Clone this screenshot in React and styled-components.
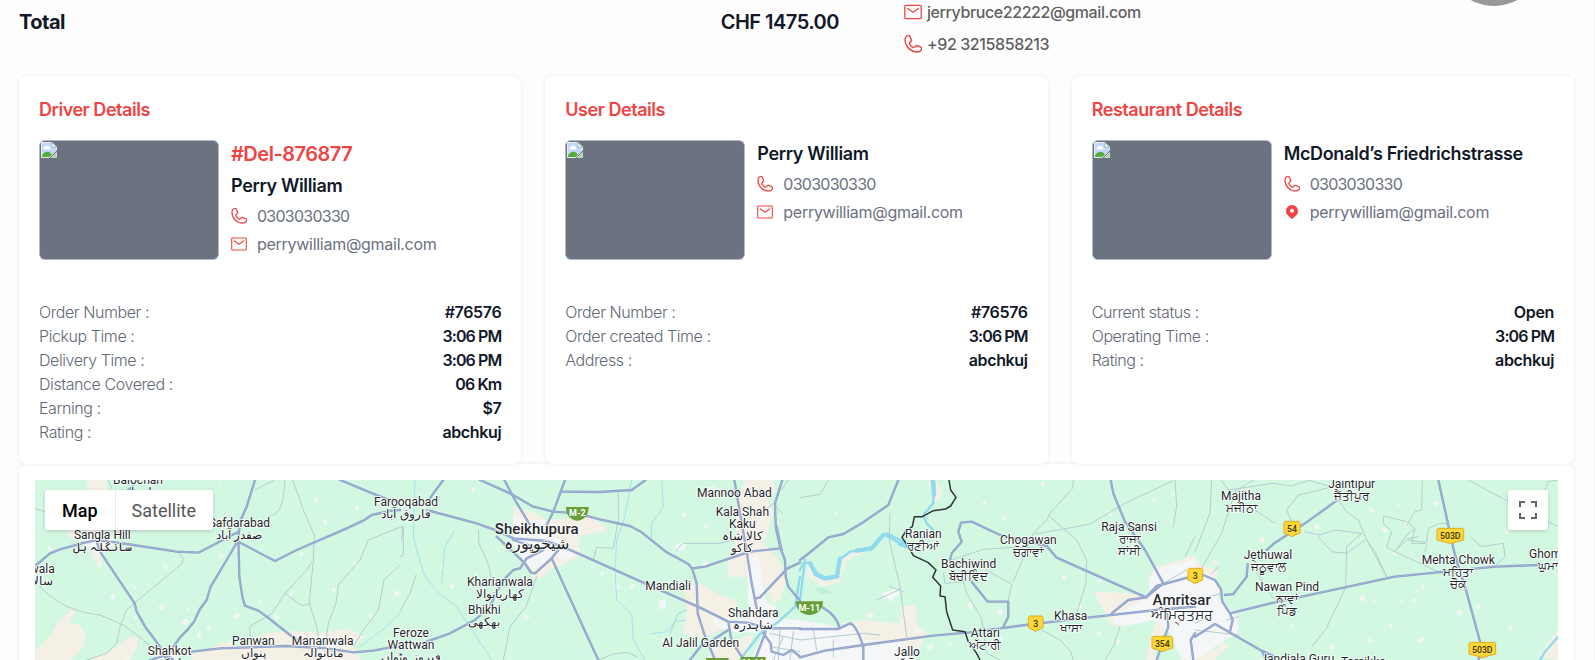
import React from "react";
import styled, { createGlobalStyle, css } from "styled-components";
import { PiPhone } from "react-icons/pi";

const red = "#ef4444";
const ink = "#111827";
const muted = "#6b7280";

const GlobalStyle = createGlobalStyle`
  *, *::before, *::after { box-sizing: border-box; }
  html, body { margin: 0; height: 100%; overflow: hidden; background: #fefefe; }
  body { font-family: Inter, "Liberation Sans", sans-serif; font-size: 16px; line-height: 24px; }
`;

/* ---------- page ---------- */

const Page = styled.main`
  height: 660px;
  padding: 0 20px 0 19px;
  overflow: hidden;
  border-right: 1px solid #f4f4f4;
  display: flex;
  flex-direction: column;
`;

const Summary = styled.header`
  flex: none;
  height: 76px;
  display: grid;
  grid-template-columns: 820px 65px 1fr auto;
  align-items: start;
`;

const TotalRow = styled.div`
  display: flex;
  justify-content: space-between;
  padding-top: 10px;
  color: ${ink};
  font-size: 20px;
  font-weight: 600;
  letter-spacing: -0.5px;
`;

const TotalLabel = styled.span`
  font-weight: 700;
`;

const Customer = styled.div`
  grid-column: 3;
  display: flex;
  flex-direction: column;
  gap: 8px;
  color: #5f6062;
  font-weight: 500;
`;

const CustomerLine = styled.div`
  display: flex;
  align-items: center;
  gap: 5px;
  letter-spacing: -0.41px;
`;

const Avatar = styled.div`
  width: 96px;
  height: 96px;
  margin: -90.5px 32px 0 0;
  border-radius: 50%;
  background: #999;
`;

/* ---------- detail cards ---------- */

const Cards = styled.section`
  position: relative;
  z-index: 1;
  flex: none;
  display: grid;
  grid-template-columns: repeat(3, 1fr);
  gap: 24px;
  height: 388px;
`;

const panel = css`
  background: #fff;
  border-radius: 8px;
  box-shadow: 0 0 5px rgba(0, 0, 0, 0.08);
`;

const Card = styled.article`
  ${panel}
  padding: 20px;
  display: flex;
  flex-direction: column;
`;

const CardTitle = styled.h2`
  margin: 0;
  height: 44px;
  line-height: 28px;
  font-size: 18px;
  font-weight: 600;
  letter-spacing: -0.46px;
  color: ${red};
`;

const Profile = styled.div`
  display: flex;
  gap: 12px;
  height: 120px;
  margin-bottom: 40px;
`;

const Photo = styled.div`
  flex: none;
  width: 180px;
  height: 120px;
  padding: 1px 0 0 1px;
  line-height: 0;
  border: 1px solid #b4b7bb;
  border-radius: 6px;
  background: ${muted};
`;

const Contact = styled.div`
  white-space: nowrap;
`;

const DriverId = styled.p`
  margin: 0;
  height: 32px;
  line-height: 28px;
  font-size: 20px;
  font-weight: 600;
  letter-spacing: -0.5px;
  color: ${red};
`;

const Name = styled.h3`
  margin: 0;
  height: 32px;
  line-height: 27px;
  font-size: 18px;
  font-weight: 600;
  letter-spacing: -0.34px;
  color: ${ink};
`;

const ContactLine = styled.p`
  margin: 0 0 4px;
  display: flex;
  align-items: center;
  gap: 10px;
  color: ${muted};
  letter-spacing: ${(p) => p.$spacing}px;
`;

const Facts = styled.dl`
  margin: 0;
`;

const Fact = styled.div`
  display: flex;
  justify-content: space-between;
  height: 24px;
`;

const FactLabel = styled.dt`
  color: #626975;
  font-weight: 300;
  letter-spacing: -0.42px;
`;

const FactValue = styled.dd`
  margin: 0;
  color: ${ink};
  font-weight: 600;
  letter-spacing: ${(p) => (p.$tight ? -0.9 : -0.35)}px;
`;

/* ---------- map panel ---------- */

const MapPanel = styled.section`
  ${panel}
  flex: none;
  padding: 16px;
  height: 230px;
`;

const MapFrame = styled.div`
  position: relative;
  height: 180px;
  overflow: hidden;
  background: #d3f8e2;
`;

const MapSvg = styled.svg`
  display: block;
  width: 100%;
  height: 100%;
  font-family: Roboto, "Noto Sans", sans-serif;
`;

const control = css`
  position: absolute;
  top: 10px;
  height: 40px;
  background: #fff;
  border-radius: 2px;
  box-shadow: 0 1px 4px -1px rgba(0, 0, 0, 0.3);
  display: flex;
  align-items: center;
`;

const MapTypes = styled.div`
  ${control}
  left: 10px;
`;

const MapType = styled.button`
  height: 40px;
  padding: 0 17px 0 ${(p) => (p.$active ? 17 : 16)}px;
  border: 0;
  border-left: ${(p) => (p.$active ? "0" : "1px solid #ececec")};
  background: none;
  font: ${(p) => (p.$active ? 500 : 400)} 18px Roboto, sans-serif;
  color: ${(p) => (p.$active ? "#000" : "#565656")};
`;

const FullscreenButton = styled.button`
  ${control}
  right: 10px;
  width: 40px;
  padding: 0;
  border: 0;
  justify-content: center;
`;

/* ---------- icons ---------- */

const PhoneIcon = ({ size = 16 }) => (
  <PiPhone size={size} viewBox="28 28 200 200" color={red} />
);

const MailIcon = ({ size = 16 }) => (
  <svg width={size} height={size} viewBox="0 0 18 18" fill="none" stroke={red} strokeWidth="1.25" strokeLinejoin="round" strokeLinecap="round">
    <rect x="0.8" y="2.3" width="16.4" height="13.4" rx="0.9" />
    <path d="M3.6 5.4 9 9.3l5.4-3.9" />
  </svg>
);

const PinIcon = () => (
  <svg width="16" height="16" viewBox="0 0 16 16">
    <path fill={red} fillRule="evenodd" d="M8 .9a6 6 0 0 1 6 6c0 3-1.900 4.700-3.700 6.100L8 15.200 5.700 13C3.900 11.600 2 9.900 2 6.900a6 6 0 0 1 6-6Zm0 3.900a2 2 0 1 0 0 4 2 2 0 0 0 0-4Z" />
  </svg>
);

const BrokenImage = () => (
  <svg width="16" height="16" viewBox="0 0 16 16">
    <path d="M.5.5h10.500l4.500 4.500v3L8.500 15.500h-8Z" fill="#c3d8f7" stroke="#e8ecf1" />
    <path d="M2.500 6.500a2 2 0 0 1 2-2 2 2 0 0 1 3.600.5 1.300 1.300 0 0 1 .4 2.500h-5a1 1 0 0 1-1-1Z" fill="#fff" />
    <path d="M1 15v-1.500c2-3.500 5.500-5 8.500-2.500L11 12.500 8.500 15Z" fill="#54ad35" />
    <path d="M10.800.6V5.200h4.600Z" fill="#fff" stroke="#929ba8" strokeWidth=".7" />
    <path d="M15.500 10.500v5h-5Z" fill="#a9d29b" stroke="#e8ecf1" strokeWidth=".7" />
  </svg>
);

const contactIcons = { phone: PhoneIcon, mail: MailIcon, pin: PinIcon };

/* ---------- data ---------- */

const cards = [
  {
    title: "Driver Details",
    id: "#Del-876877",
    name: "Perry William",
    contacts: [["phone", "0303030330"], ["mail", "perrywilliam@gmail.com"]],
    facts: [
      ["Order Number :", "#76576"],
      ["Pickup Time :", "3:06 PM"],
      ["Delivery Time :", "3:06 PM"],
      ["Distance Covered :", "06 Km"],
      ["Earning :", "$7"],
      ["Rating :", "abchkuj"],
    ],
  },
  {
    title: "User Details",
    name: "Perry William",
    contacts: [["phone", "0303030330"], ["mail", "perrywilliam@gmail.com"]],
    facts: [
      ["Order Number :", "#76576"],
      ["Order created Time :", "3:06 PM"],
      ["Address :", "abchkuj"],
    ],
  },
  {
    title: "Restaurant Details",
    name: "McDonald’s Friedrichstrasse",
    contacts: [["phone", "0303030330"], ["pin", "perrywilliam@gmail.com"]],
    facts: [
      ["Current status :", "Open"],
      ["Operating Time :", "3:06 PM"],
      ["Rating :", "abchkuj"],
    ],
  },
];

/* Map geometry is stored per tile, at three units to the pixel. */
const tiles = [
  {
    x: 0,
    sand: [
      "M105 575C130 540 155 535 170 490L215 447 227 455 207 490 240 495C265 530 262 555 215 600H105Z",
      "M262 60H320V90H262ZM195 200 300 195 310 225 300 310 278 300 272 245 210 235Z",
      "M330 575 385 530 412 530 412 560 390 600H265Z",
      "M575 585 640 560 668 545 720 560 800 520 880 512 960 520 1040 505 1095 530 1060 560 1080 600H575Z",
    ],
    town: ["M255 225 330 222 345 250 300 285 255 262Z", "M470 565 540 560 530 600H470Z", "M930 525 1010 530 1020 560 940 570Z"],
    minor: [
      "M105 145 140 157M325 60 335 85M120 380C190 450 250 458 300 465L370 495 450 555",
      "M535 278 550 295 545 312 408 425 380 450 360 500 350 550 320 580 260 600",
      "M855 60C850 110 850 150 820 165L805 170M765 90 820 62",
      "M878 60 910 150 943 225 940 300 928 430 950 500 960 560",
      "M935 305 920 330 855 400 815 462 750 498 750 530M855 400 906 437 930 430",
      "M1208 200 1205 240M1205 200 1105 240 1080 300 1015 375 1008 430 985 490 975 560",
      "M1200 315 1152 360 1135 450 1090 510 1060 560",
    ],
    water: ["M1200 460 1160 500 1080 560"],
    major: [
      "M105 318 150 280 180 268 245 250 290 240 330 245 400 255 530 275 595 278 650 250 715 215",
      "M765 60 740 140 722 180 715 230 718 350 727 410 735 437 775 452 800 470 870 525 900 548",
      "M715 240 680 300 632 380 620 420 600 447 582 485 560 512 540 532 510 575 500 600",
      "M718 247 825 303 890 270 1025 212 1090 182 1115 165 1175 152 1200 150",
      "M1020 60 1110 97 1180 125",
      "M290 245 300 275 404 430 410 455 437 503 450 520 480 560 500 600",
      "M575 575 660 565 860 558 980 565 1060 577 1120 572 1200 557",
      "M385 90 400 78M450 600 500 585 520 600",
    ],
    specks: "660,75 948,118 1070,145 977,186 903,282 1065,310 150,265 297,312 495,320 405,380 336,410 483,442 562,445 624,504 710,467 830,470 777,425 1000,388 1112,467 555,487 405,475 665,285 597,525 1190,400 780,220 690,550 870,405 385,590",
  },
  {
    x: 1200,
    sand: [
      "M340 140 410 160 440 180 570 170 620 200 615 215 540 225 535 260 545 285 480 320 455 325 425 355 395 350 390 325 360 300 390 285 350 225Z",
      "M1035 60 1115 60 1130 90 1100 115 1120 160 1090 250 1130 290 1160 350 1140 420 1115 430 1090 370 1030 350 985 350 985 290 1010 240 1010 130Z",
      "M850 385 905 370 945 400 1005 420 1020 460 985 500 920 530 880 530 850 520 860 460 855 420Z",
      "M945 555 1010 540 1060 520 1040 600H920Z",
    ],
    town: [
      "M340 165 375 180 440 180 470 235 535 280 500 300 470 290 430 310 400 330 370 300 340 255Z",
      "M1040 290 1075 290 1085 350 1100 430 1130 440 1110 480 1050 490 1045 420Z",
      "M935 460 1000 480 1040 470 1200 480 1200 600 1050 600 1090 520 985 515 940 490Z",
      "M820 265 840 247 857 253 850 272ZM775 423 795 421 797 445 777 447Z",
    ],
    minor: [
      "M235 212 237 250 268 320 275 380M410 350 378 440 330 500 310 600",
      "M655 100 655 180 640 265 590 262 580 300M830 268 850 250 960 250 1000 240",
      "M595 600 640 582 680 577 710 590M0 455 30 400 48 345M10 200V285L0 290",
      "M860 450 835 460 810 520M1147 160 1120 130 1095 150M1165 60 1145 90",
      "M1110 520 1200 540M1120 600 1150 530M1180 515 1170 600M1110 560 1200 575M1140 510 1135 600",
    ],
    water: ["M45 60 40 230 70 340 110 395 170 440 275 600", "M165 210 135 260 125 370", "M695 60 672 180 650 240 645 330 650 420 695 462 700 540 735 600", "M785 60 790 140 755 190 755 235", "M750 522 800 515 825 485 857 480"],
    river: ["M1200 350 1190 410 1185 440 1130 490 1085 515 1035 580 1020 600"],
    major: [
      "M240 60 330 100 400 140 460 155 530 160 600 178 690 198 725 217 800 277 865 312 877 327 890 370 893 460 912 520 945 600",
      "M495 60 460 155 440 195M313 60 345 120 390 195",
      "M485 95 600 96 695 90 737 60M130 60 100 100 80 130",
      "M80 150 230 190 290 212 340 235 440 243 500 265 735 370 900 443 985 485",
      "M877 325 915 320 1050 275 1140 265",
      "M1147 60 1125 130 1127 200 1140 260 1155 300 1157 350 1165 380 1200 422",
      "M1003 60 1015 130 1040 275 1055 370 1070 445M1200 308 1162 325 1080 412 1065 416",
      "M290 230 375 310 393 338 405 340 455 295 475 270M340 240 430 270 380 295 360 325 340 330 315 355 290 395 270 440 225 480 150 520 80 545",
      "M455 295 535 470 595 600M1130 200 1145 270",
      "M985 485 1040 488 1110 505 1200 505M985 485 995 545 1025 590",
      "M985 510 930 545 905 555 870 600M1097 515 1080 560 1065 600M1090 520 1112 550 1115 575 1150 585 1175 570 1200 590",
    ],
    specks: "120,155 218,88 125,323 155,378 250,370 605,340 655,380 835,260 785,435 920,200 695,380 915,312 520,440 850,165 935,85 380,470 60,590 790,540",
  },
  {
    x: 2400,
    sand: [
      "M380 62 410 62 425 90 415 125 400 125 395 85Z",
      "M20 310 50 345 100 355 115 300 165 275 205 270 140 300 120 365 70 380 20 350Z",
      "M120 490 190 480 300 490 305 440 345 432 350 490 380 520 360 560 340 600 285 565 190 545 165 500Z",
      "M880 395 985 400 1045 410 1040 435 960 460 965 490 935 500 905 440Z",
      "M1070 320 1185 285V310L1110 330 1060 375 1045 350Z",
      "M1070 480 1110 500 1060 560 1070 600H1040L1050 540Z",
    ],
    town: [
      "M0 480 60 490 115 500 170 490 195 540 295 545 345 580 330 600H0Z",
      "M1045 360 1075 325 1185 300V600H1145L1110 520 1060 480 965 500 935 485 960 455 1050 410Z",
      "M245 400 290 385 305 395 270 425ZM195 465 215 455 222 470 205 475Z",
    ],
    green: ["M40 385 70 383 100 400 65 402Z"],
    minor: [
      "M0 113 60 103 85 60M820 60 818 85 750 160 740 180 700 220 640 365",
      "M750 170 830 240 860 300 858 370 830 460M705 222 830 200 870 192 975 130 1120 62",
      "M455 300 550 268 640 262 720 265M430 340 435 370 490 365 500 400 545 475 560 580 600 600",
      "M550 325 635 373 625 420M725 510 780 540 812 575 820 600",
      "M270 160 268 240 300 380 320 530M270 380 310 395M230 420 300 388M0 540 190 520 240 525",
      "M1125 60 1130 140 1120 200M1185 230 1155 290M40 510 50 570M100 540V590M1090 370 1160 330M960 500 940 560 915 600",
    ],
    river: ["M0 330 10 310 30 308 45 345 75 358 115 350 118 300 150 275 210 268 250 222 300 250 335 262", "M0 420 15 300M395 60 400 100 400 130 370 165 380 190 400 210M260 220 320 250"],
    wide: ["M30 310 48 342 75 355 110 350 120 295M170 272 215 265 250 225M300 252 325 260M400 65 402 105"],
    major: [
      "M0 300 20 285 85 232 130 222 185 190 265 135 295 60",
      "M450 300 455 280 485 245 475 215 483 188 515 185 600 225 740 258 770 293 1038 412 1070 378 1185 347",
      "M515 365 563 425 625 425 625 470 610 500",
      "M0 592 75 572 190 555 400 527 510 517 700 492 870 472 1070 450 1185 440",
      "M0 507H115L150 490C170 495 185 545 190 560V600M0 430 65 440C90 455 115 475 118 505",
      "M932 60 940 100 975 185 1035 270 1090 370 1038 412 985 420 935 460",
      "M1100 450 1105 500 1070 600M1185 520 1172 540 1180 600",
    ],
    border: ["M447 60 452 90 468 112 452 138 437 147 400 152 367 170 343 170 337 200 318 213 306 232 325 260 340 287 385 308 408 330 398 352 422 378 420 408 435 410 440 455 458 510 495 515 505 545 530 580 540 600"],
    specks: "108,160 552,130 727,73 930,160 1120,100 790,352 612,172 510,436 210,465 450,550 350,510 600,455 605,535 895,520 838,440 955,545 1060,120 900,360 255,410 390,560",
  },
  {
    x: 3585,
    sand: ["M0 290 15 315 70 330 65 350 20 345 0 320ZM50 300 75 305 60 320Z", "M0 560 60 570 85 540 100 560 60 600H0Z", "M1030 590 1060 545 1089 510V600Z"],
    town: ["M0 320 60 350 80 390 65 410 130 470 130 520 90 540 0 600Z"],
    minor: [
      "M50 60 45 160 0 275M175 60 120 95 80 220 0 360M80 62 100 90 235 70 290 78 345 60",
      "M180 150 240 190M275 150 310 105 375 90 410 80 345 62M275 150 290 185",
      "M430 120 455 155 490 180 515 240 575 350M365 225 410 275 455 280 510 240M330 215 375 225 420 210 500 220 455 260 452 380 435 420 405 480 395 505 350 560",
      "M600 275 740 340M565 170 565 190 590 215 575 262 600 275 635 225 660 205 635 185 565 168M635 195 660 155 680 150 682 60M640 240 695 248 700 205 735 190 760 190M600 272 640 235 670 230M660 205 650 250 690 250",
      "M690 275 695 255M575 350 540 275 515 240M830 235 860 260 925 250 930 290 900 318M820 60 940 125M1060 185 1089 200",
      "M1089 60 1060 65 1050 95M185 340 205 370 235 415M0 510 130 525M130 470 95 480M0 490 40 470",
      "M70 320 50 340M0 420 80 400",
    ],
    river: ["M1035 600 1050 575 1089 530"],
    major: [
      "M425 122 330 190 240 248 215 270",
      "M730 60 762 205 775 265 790 320 810 380 862 570 850 600",
      "M310 412 575 355 600 350 750 335 900 320 1030 315",
      "M0 335 60 360 78 388 82 425 105 460 113 480 105 515M105 460 240 427 310 412",
      "M158 312 155 350 115 402 90 405M0 530 60 492 200 572 215 600M200 572 240 590",
    ],
    specks: "55,155 117,118 415,75 530,150 610,135 635,188 365,222 200,240 595,280 685,380 848,440 792,457 620,425 587,497 677,540 947,502 292,497 890,560 525,540 500,415 540,420 935,215 720,130 410,560 210,575 655,420 365,200 570,210",
  },
];

/* Place names: centre x, baseline y of the first line, then the lines. */
const places = [
  [414, 73, "Balochan", "بلوچاں"],
  [307, 238, "Sangla Hill", "سانگلہ ہل"],
  [718, 201, "Safdarabad", "صفدر آباد"],
  [127, 339, "wala", "سالا"],
  [509, 586, "Shahkot", "شاہکوٹ"],
  [760, 556, "Panwan", "پنواں"],
  [968, 556, "Mananwala", "مانانوالہ"],
  [1218, 139, "Farooqabad", "فاروق آباد"],
  [1233, 532, "Feroze", "Wattwan", "فیروز وٹواں"],
  [1500, 378, "Kharianwala", "کھاریانوالا"],
  [1453, 462, "Bhikhi", "بھکھی"],
  [2203, 111, "Mannoo Abad"],
  [2227, 168, "Kala Shah", "Kaku", "کالا شاہ", "کاکو"],
  [2004, 390, "Mandiali"],
  [2260, 471, "Shahdara", "شاہدرہ"],
  [2102, 561, "Al Jalil Garden"],
  [2770, 234, "Ranian", "ਰਣੀਆਂ"],
  [2906, 324, "Bachiwind", "ਬੱਚੀਵਿੰਦ"],
  [3085, 252, "Chogawan", "ਚੋਗਾਵਾਂ"],
  [3387, 213, "Raja Sansi", "ਰਾਜਾ", "ਸਾਂਸੀ"],
  [2956, 531, "Attari", "ਅੱਟਾਰੀ"],
  [3212, 480, "Khasa", "ਖਾਸਾ"],
  [2721, 588, "Jallo", "ਜੱਲੋ"],
  [3723, 120, "Majitha", "ਮਜੀਠਾ"],
  [4055, 84, "Jaintipur", "ਜੈਂਤੀਪੁਰ"],
  [3804, 297, "Jethuwal", "ਜੇਠੂਵਾਲ"],
  [3861, 393, "Nawan Pind", "ਨਾਵਾਂ", "ਪਿੰਡ"],
  [4375, 312, "Mehta Chowk", "ਮਹਿਤਾ", "ਚੌਕ"],
  [4655, 294, "Ghoman", "ਘੁਮਾਣ"],
  [3892, 610, "Jandiala Guru"],
  [4090, 619, "Tarsikka"],
];

const cities = [
  [1610, 223, "Sheikhupura", "شیخوپورہ"],
  [3545, 435, "Amritsar", "ਅੰਮ੍ਰਿਤਸਰ"],
];

const shields = [
  [3107, 490, 44, "3"],
  [3586, 347, 44, "3"],
  [3487, 551, 62, "354"],
  [3876, 206, 48, "54"],
  [4351, 227, 80, "503D"],
  [4447, 569, 80, "503D"],
];

const motorways = [
  [1732, 160, "M-2", 68],
  [2428, 443, "M-11", 82],
  [2152, 613, "M-2", 68],
  [2260, 610, "M-11", 74],
];

/* ---------- map drawing ---------- */

const Paths = ({ list = [], ...rest }) => list.map((d) => <path key={d} d={d} {...rest} />);

const Specks = ({ points }) =>
  points.split(" ").map((p, i) => {
    const [x, y] = p.split(",").map(Number);
    const r = 6 + (i % 4) * 1.5;
    return (
      <path
        key={p}
        fill="#f3f6f4"
        d={i % 3 ? `M${x - r} ${y + 3}L${x + 2} ${y - r} ${x + r} ${y - 2} ${x + 4} ${y + r}Z` : `M${x - r} ${y - r}L${x + r} ${y + 2} ${x - 2} ${y + r}Z`}
      />
    );
  });

const line = { fill: "none", strokeLinejoin: "round", strokeLinecap: "round" };

const isLatin = (s) => /^[A-Za-z]/.test(s);
const isArabic = (s) => /^[\u0600-\u06ff]/.test(s);

const PlaceName = ({ place: [x, y, ...lines], size, weight }) => (
  <text textAnchor="middle" fontWeight={weight} fill="#23272b" stroke="#fff" strokeWidth="5" strokeLinejoin="round" paintOrder="stroke">
    {lines.map((l, i) => (
      <tspan key={l} x={x} y={y + i * size} fontSize={isLatin(l) ? size : size * (isArabic(l) ? 1.04 : 0.96)}>
        {l}
      </tspan>
    ))}
  </text>
);

const RegionMap = () => (
  <MapSvg viewBox="105 60 4569 540" preserveAspectRatio="none">
    {tiles.map((t) => (
      <g key={t.x} transform={`translate(${t.x} 0)`}>
        <Paths list={t.sand} fill="#f5f0e5" />
        <Paths list={t.town} fill="#f5f6f8" />
        <Paths list={t.green} fill="#bff0d4" />
        <Specks points={t.specks} />
        <Paths list={t.water} {...line} stroke="#a2e4ee" strokeWidth="3" />
        <Paths list={t.river} {...line} stroke="#90daee" strokeWidth="7" />
        <Paths list={t.wide} {...line} stroke="#90daee" strokeWidth="13" />
        <Paths list={t.minor} {...line} stroke="#b3cdd0" strokeWidth="3" />
      </g>
    ))}
    {tiles.map((t) => (
      <g key={t.x} transform={`translate(${t.x} 0)`}>
        <Paths list={t.major} {...line} stroke="#8b9fc9" strokeWidth="7" />
        <Paths list={t.major} {...line} stroke="#a3b3d6" strokeWidth="3" />
        <Paths list={t.border} {...line} stroke="#2f3336" strokeWidth="4.5" />
      </g>
    ))}
    {motorways.map(([x, y, label, w]) => (
      <g key={x}>
        <path fill="#689f38" d={`M${x - w / 2} ${y - 19}H${x + w / 2}C${x + w / 2} ${y + 8} ${x + w / 4} ${y + 22} ${x} ${y + 22}S${x - w / 2} ${y + 8} ${x - w / 2} ${y - 19}Z`} />
        <text x={x} y={y + 9} textAnchor="middle" fontSize="27" fontWeight="700" fill="#fff">{label}</text>
      </g>
    ))}
    {shields.map(([x, y, w, label]) => (
      <g key={x}>
        <path fill="#fdd835" stroke="#e0a92a" strokeWidth="3" strokeLinejoin="round" d={`M${x - w / 2 + 3} ${y - 22}H${x + w / 2 - 3}L${x + w / 2} ${y - 18}V${y + 13}L${x + w / 4} ${y + 18} ${x} ${y + 24} ${x - w / 4} ${y + 18} ${x - w / 2} ${y + 13}V${y - 18}Z`} />
        <text x={x} y={y + 10} textAnchor="middle" fontSize="26" fontWeight="500" fill="#3b3413">{label}</text>
      </g>
    ))}
    {places.map((p) => <PlaceName key={p[2]} place={p} size={36} weight={400} />)}
    {cities.map((p) => <PlaceName key={p[2]} place={p} size={45} weight={500} />)}
  </MapSvg>
);

/* ---------- components ---------- */

const DetailCard = ({ title, id, name, contacts, facts }) => (
  <Card>
    <CardTitle>{title}</CardTitle>
    <Profile>
      <Photo><BrokenImage /></Photo>
      <Contact>
        {id && <DriverId>{id}</DriverId>}
        <Name>{name}</Name>
        {contacts.map(([kind, value]) => {
          const Icon = contactIcons[kind];
          return (
            <ContactLine key={kind} $spacing={kind === "phone" ? -0.75 : -0.28}>
              <Icon />
              {value}
            </ContactLine>
          );
        })}
      </Contact>
    </Profile>
    <Facts>
      {facts.map(([label, value]) => (
        <Fact key={label}>
          <FactLabel>{label}</FactLabel>
          <FactValue $tight={/^\d/.test(value)}>{value}</FactValue>
        </Fact>
      ))}
    </Facts>
  </Card>
);

export default function App() {
  return (
    <Page>
      <GlobalStyle />
      <Summary>
        <TotalRow>
          <TotalLabel>Total</TotalLabel>
          <span>CHF 1475.00</span>
        </TotalRow>
        <Customer>
          <CustomerLine><MailIcon size={18} />jerrybruce22222@gmail.com</CustomerLine>
          <CustomerLine><PhoneIcon size={18} />+92 3215858213</CustomerLine>
        </Customer>
        <Avatar />
      </Summary>
      <Cards>
        {cards.map((c) => <DetailCard key={c.title} {...c} />)}
      </Cards>
      <MapPanel>
        <MapFrame>
          <RegionMap />
          <MapTypes>
            <MapType $active>Map</MapType>
            <MapType>Satellite</MapType>
          </MapTypes>
          <FullscreenButton aria-label="Toggle fullscreen view">
            <svg width="18" height="18" viewBox="0 0 18 18" fill="#666">
              <path d="M0 0v6h2V2h4V0H0Zm16 0h-4v2h4v4h2V0h-2Zm0 16h-4v2h6v-6h-2v4ZM2 12H0v6h6v-2H2v-4Z" />
            </svg>
          </FullscreenButton>
        </MapFrame>
      </MapPanel>
    </Page>
  );
}
